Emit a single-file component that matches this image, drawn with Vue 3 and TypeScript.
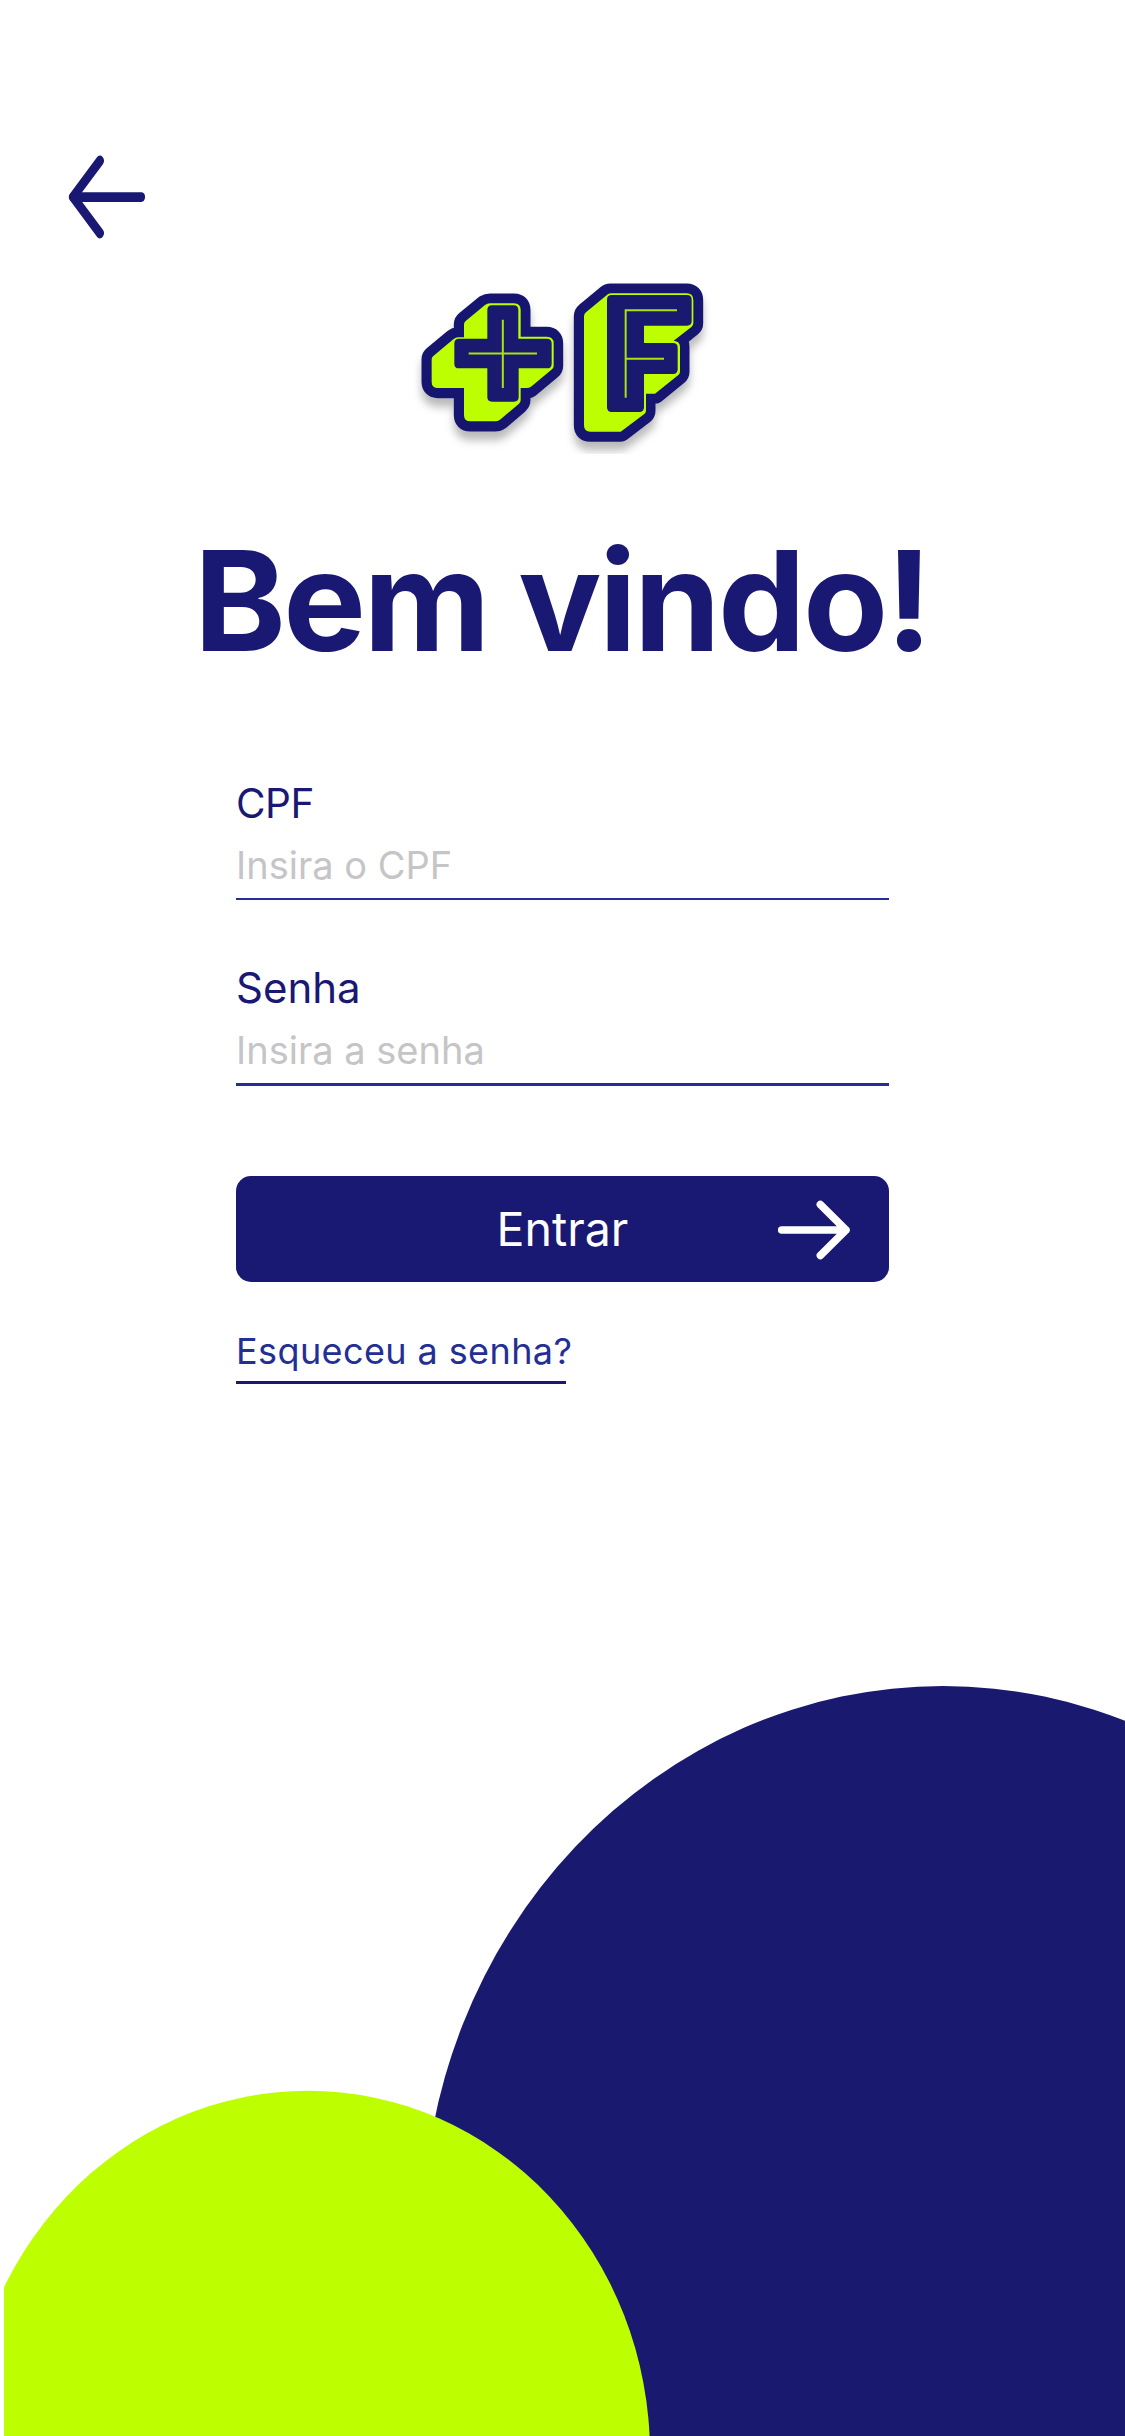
<script setup lang="ts">
import { ref } from 'vue'

interface Field {
  id: string
  label: string
  placeholder: string
  type: string
}

const fields: Field[] = [
  { id: 'cpf', label: 'CPF', placeholder: 'Insira o CPF', type: 'text' },
  { id: 'senha', label: 'Senha', placeholder: 'Insira a senha', type: 'password' },
]

const values = ref<Record<string, string>>({ cpf: '', senha: '' })
</script>

<template>
  <main class="screen">
    <header class="top">
      <button class="back" type="button" aria-label="Voltar">
        <svg width="120" height="110" viewBox="0 0 360 330">
          <g transform="translate(0 171) scale(1 1.3)" fill="none" stroke="#191873" stroke-linecap="round" stroke-linejoin="round">
            <path stroke-width="24" d="M149.500 -83.500L69 0L149.500 83.500" />
            <path stroke-width="22.500" d="M69 0H274" />
          </g>
        </svg>
      </button>
    </header>

    <svg class="logo" width="320" height="184" viewBox="0 0 960 552">
      <defs>
        <filter id="shade" x="-10%" y="-10%" width="120%" height="130%">
          <feDropShadow dx="0" dy="26" stdDeviation="12" flood-color="#000" flood-opacity="0.27" />
        </filter>
      </defs>
      <g filter="url(#shade)" fill="#191970" stroke="#191970" stroke-width="61" stroke-linejoin="round">
        <path d="M192 163Q192 157 197 153L255 105Q262 101 270 101H342Q361 101 361 120V201H440Q459 201 459 220V288Q459 294 454 298L387 354H361V390Q361 396 356 401L300 449Q293 454 286 454H211Q192 454 192 435V354H114Q95 354 95 335V268Q95 262 100 258L160 208Q167 202 175 202H192Z" />
        <path d="M552 139Q552 132 558 127L617 78Q624 71 632 71H860Q879 71 879 91V160Q879 166 874 170L821 212Q838 214 838 230V305Q838 311 833 315L765 371H736V422Q736 428 731 432L662 485H571Q552 485 552 466Z" />
      </g>
      <g fill="#bdff00">
        <path d="M192 163Q192 157 197 153L255 105Q262 100 270 100H342Q362 100 362 120V200H440Q461 200 461 220V288Q461 294 456 298L393 350Q387 354 380 354H362V390Q362 396 357 401L300 449Q293 454 286 454H211Q192 454 192 435V354H114Q95 354 95 335V268Q95 262 100 258L160 208Q167 202 175 202H192Z" />
        <path d="M552 139Q552 132 558 127L617 78Q624 70 632 70H860Q880 70 880 91V160Q880 166 875 170L821 212Q840 214 840 230V305Q840 311 835 315L765 371H738V422Q738 428 733 432L662 485H571Q552 485 552 466Z" />
      </g>
      <g fill="#191970">
        <path d="M276 106H341Q355 106 355 120V206H441Q455 206 455 220V281Q455 295 441 295H356V381Q356 395 342 395H276Q262 395 262 381V295H177Q163 295 163 281V220Q163 206 177 206H262V120Q262 106 276 106Z" />
        <path d="M635 75H861Q875 75 875 89V153Q875 167 861 167H732V219H819Q833 219 833 233V298Q833 312 819 312H732V412Q732 426 718 426H635Q621 426 621 412V89Q621 75 635 75Z" />
      </g>
      <g fill="none" stroke="#a9e20c" stroke-width="6">
        <path d="M308.500 149V354M206 250.500H411" />
        <path d="M831 121H677V383M677 266H792" />
      </g>
    </svg>

    <h1 class="title">Bem vindo!</h1>

    <form class="form" @submit.prevent>
      <div v-for="f in fields" :key="f.id" class="field" :class="f.id">
        <label class="label" :for="f.id">{{ f.label }}</label>
        <input :id="f.id" v-model="values[f.id]" class="input" :type="f.type" :placeholder="f.placeholder" />
      </div>

      <button class="submit" type="submit">
        <span class="submit-text">Entrar</span>
        <svg class="submit-arrow" width="80" height="66" viewBox="0 0 240 198">
          <path d="M35 99H228M151 22.500L228 99L151 175.500" fill="none" stroke="#fff" stroke-width="22.500" stroke-linecap="round" stroke-linejoin="round" />
        </svg>
      </button>

      <a class="forgot" href="#">Esqueceu a senha?</a>
    </form>

    <svg class="blobs" width="1125" height="776" viewBox="0 1660 1125 776">
      <defs>
        <clipPath id="edge"><rect x="4" y="1660" width="1121" height="776" /></clipPath>
      </defs>
      <ellipse cx="943" cy="2236" rx="520.3" ry="550" fill="#191970" />
      <ellipse cx="308" cy="2453.7" rx="342" ry="363" fill="#bdff00" clip-path="url(#edge)" />
    </svg>
  </main>
</template>

<style>
body {
  margin: 0;
  background: #fff;
}
</style>

<style scoped>
.screen {
  display: flex;
  flex-direction: column;
  width: 1125px;
  height: 2436px;
  overflow: hidden;
  background: #fff;
  color: #191873;
  font-family: Inter, "Liberation Sans", sans-serif;
}

.top {
  height: 130px;
  padding: 140px 0 0 50px;
}

button {
  border: 0;
  padding: 0;
  background: none;
  font: inherit;
  cursor: pointer;
}

.back,
.back svg {
  display: block;
}

.logo {
  display: block;
  flex: none;
  margin-left: 400px;
}

.title {
  margin: 66px 0 0;
  padding-left: 194px;
  height: 161px;
  line-height: 161px;
  font-size: 139px;
  font-weight: 700;
  letter-spacing: -2.6px;
  white-space: nowrap;
}

.form {
  display: flex;
  flex-direction: column;
  width: 653px;
  margin: 93px 0 0 236px;
}

.field {
  display: flex;
  flex-direction: column;
  box-sizing: border-box;
  height: 126px;
  border-bottom: 2px solid #242f96;
}

.field.senha {
  height: 127px;
  margin-top: 59px;
  border-bottom-width: 3px;
}

.label {
  height: 59px;
  line-height: 59px;
  font-size: 40.5px;
  letter-spacing: -0.5px;
}

.senha .label {
  height: 58px;
  line-height: 58px;
  font-size: 42px;
  letter-spacing: 0;
}

.input {
  width: 100%;
  height: 63px;
  padding: 0;
  border: 0;
  outline: 0;
  background: transparent;
  color: #191873;
  font: 38px Inter, "Liberation Sans", sans-serif;
}

.senha .input {
  height: 66px;
}

.input::placeholder {
  color: #c5c5c7;
  opacity: 1;
}

.submit {
  display: grid;
  grid-template-columns: 1fr auto 1fr;
  align-items: center;
  height: 106px;
  margin-top: 90px;
  border-radius: 15px;
  background: #191873;
  color: #fff;
}

.submit-text {
  grid-column: 2;
  font-size: 46.5px;
}

.submit-arrow {
  justify-self: end;
  margin-right: 39px;
  margin-top: 2px;
}

.forgot {
  align-self: flex-start;
  box-sizing: border-box;
  width: 330px;
  height: 67px;
  margin-top: 35px;
  border-bottom: 3px solid #191873;
  color: #242f96;
  font-size: 36px;
  letter-spacing: 0.4px;
  line-height: 68px;
  text-decoration: none;
  white-space: nowrap;
}

.blobs {
  display: block;
  flex: none;
  margin-top: auto;
}
</style>
